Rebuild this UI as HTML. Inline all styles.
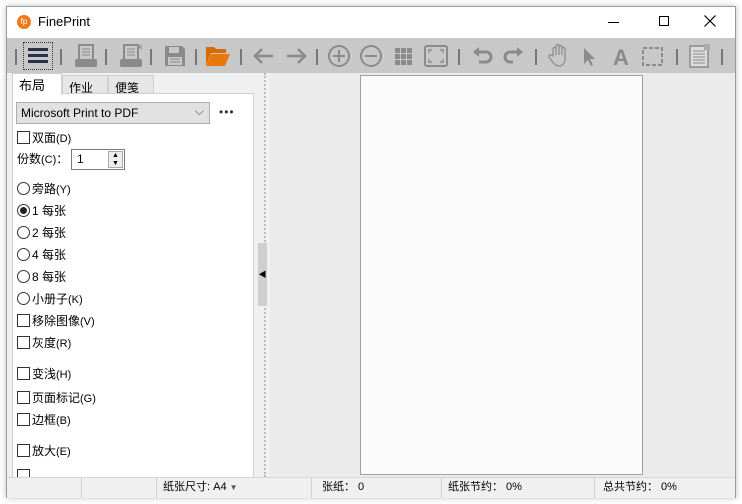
<!DOCTYPE html><html><head><meta charset="utf-8"><style>
*{margin:0;padding:0;box-sizing:border-box}
body{width:742px;height:504px;background:#fff;position:relative;overflow:hidden;font-family:"Liberation Sans","Noto Sans CJK SC",sans-serif;font-size:12px;color:#000}
.win{position:absolute;left:6px;top:6px;width:730px;height:492px;border:1px solid #9a9a9a;background:#f0f0f0;box-shadow:0 0 6px rgba(0,0,0,.25)}
.a{position:absolute}
.tb{left:0;top:31px;width:728px;height:35px;background:#c8c8c8}
.sep{position:absolute;top:11px;width:2px;height:16px;background:#777}
.row{position:absolute;left:10px;font-size:12px;height:16px;line-height:16px;white-space:nowrap}
.cb{display:inline-block;vertical-align:-2px;width:13px;height:13px;border:1px solid #333;background:#fff;margin-right:2px}
.rb{display:inline-block;vertical-align:-2px;width:13px;height:13px;border:1px solid #333;border-radius:50%;background:#fff;margin-right:2px;position:relative}
.sm{font-size:11px}
.st{position:absolute;top:470px;height:21px;border-left:1px solid #d0d0d0;font-size:11px;line-height:21px}
</style></head><body>
<div class="win">
<div class="a" style="left:0;top:0;width:728px;height:31px;background:#fff"></div>
<div class="a" style="left:10px;top:8px;width:14px;height:14px;border-radius:50%;background:#f07a1a;color:#fff;font-size:8px;line-height:14px;text-align:center">fp</div>
<div class="a" style="left:31px;top:7px;font-size:13px">FinePrint</div>
<div class="a" style="left:601px;top:15px;width:11px;height:1px;background:#000"></div>
<div class="a" style="left:652px;top:9px;width:10px;height:10px;border:1px solid #000"></div>
<svg class="a" style="left:697px;top:8px" width="12" height="12"><path d="M0.5 0.5l11 11M11.5 0.5l-11 11" stroke="#000" stroke-width="1.2"/></svg>
<div class="a tb">
<div class="sep" style="left:8px"></div>
<div class="a" style="left:16px;top:4px;width:30px;height:28px;border:1px dotted #333"></div>
<div class="a" style="left:21px;top:10px;width:20px;height:3px;background:#2a2f4a;box-shadow:0 6px 0 #2a2f4a,0 12px 0 #2a2f4a"></div>
<div class="sep" style="left:53px"></div>
<svg class="a" style="left:66px;top:5px" width="28" height="26"><rect x="6" y="2" width="14" height="15" fill="none" stroke="#8a8a8a" stroke-width="2"/><path d="M9 6h8M9 9h8M9 12h8" stroke="#8a8a8a"/><rect x="2" y="16" width="22" height="8" rx="2" fill="#8a8a8a"/></svg>
<div class="sep" style="left:98px"></div>
<svg class="a" style="left:111px;top:5px" width="28" height="26"><rect x="6" y="2" width="14" height="15" fill="none" stroke="#8a8a8a" stroke-width="2"/><path d="M9 6h8M9 9h8M9 12h8M20 2l4 4M24 2l-4 4" stroke="#8a8a8a"/><rect x="2" y="16" width="22" height="8" rx="2" fill="#8a8a8a"/></svg>
<div class="sep" style="left:143px"></div>
<svg class="a" style="left:156px;top:6px" width="24" height="24"><path d="M2 2h17l3 3v17H2z" fill="#8a8a8a"/><rect x="6" y="3" width="10" height="6" fill="#c8c8c8"/><rect x="5" y="13" width="14" height="8" fill="#c8c8c8"/><path d="M7 15h10M7 18h10" stroke="#8a8a8a"/></svg>
<div class="sep" style="left:188px"></div>
<svg class="a" style="left:198px;top:6px" width="26" height="24"><path d="M1 3h8l2 2h10v4H6L1 21z" fill="#d86a00"/><path d="M6 10h19l-5 12H1z" fill="#e8780a"/></svg>
<div class="sep" style="left:233px"></div>
<svg class="a" style="left:244px;top:7px" width="80" height="22"><path d="M4 11h18M11 4l-7 7 7 7" fill="none" stroke="#8a8a8a" stroke-width="2.5"/><path d="M36 11h18M47 4l7 7-7 7" fill="none" stroke="#8a8a8a" stroke-width="2.5"/></svg>
<div class="sep" style="left:309px"></div>
<svg class="a" style="left:320px;top:6px" width="130" height="24"><circle cx="12" cy="12" r="10" fill="none" stroke="#8a8a8a" stroke-width="2"/><path d="M12 6v12M6 12h12" stroke="#8a8a8a" stroke-width="2"/><circle cx="44" cy="12" r="10" fill="none" stroke="#8a8a8a" stroke-width="2"/><path d="M38 12h12" stroke="#8a8a8a" stroke-width="2"/><g fill="#8a8a8a"><rect x="68" y="4" width="5" height="5"/><rect x="74" y="4" width="5" height="5"/><rect x="80" y="4" width="5" height="5"/><rect x="68" y="10" width="5" height="5"/><rect x="74" y="10" width="5" height="5"/><rect x="80" y="10" width="5" height="5"/><rect x="68" y="16" width="5" height="5"/><rect x="74" y="16" width="5" height="5"/><rect x="80" y="16" width="5" height="5"/></g><rect x="98" y="2" width="22" height="20" rx="2" fill="none" stroke="#8a8a8a" stroke-width="2"/><path d="M102 9V6h3M116 9V6h-3M102 15v3h3M116 15v3h-3" fill="none" stroke="#8a8a8a" stroke-width="1.5"/></svg>
<div class="sep" style="left:451px"></div>
<svg class="a" style="left:465px;top:7px" width="60" height="22"><path d="M4 7h10a5 5 0 0 1 0 10H7" fill="none" stroke="#8a8a8a" stroke-width="3"/><path d="M1 7l6-5v10z" fill="#8a8a8a"/><path d="M48 7H38a5 5 0 0 0 0 10h3" fill="none" stroke="#8a8a8a" stroke-width="3"/><path d="M51 7l-6-5v10z" fill="#8a8a8a"/></svg>
<div class="sep" style="left:528px"></div>
<svg class="a" style="left:540px;top:5px" width="130" height="26"><path d="M6 13V6a1.5 1.5 0 0 1 3 0v6V3a1.5 1.5 0 0 1 3 0v9V4a1.5 1.5 0 0 1 3 0v8V6a1.5 1.5 0 0 1 3 0v10c0 4-3 7-6 7s-5-2-7-5l-3-4a1.5 1.5 0 0 1 2-2z" fill="none" stroke="#8a8a8a" stroke-width="1.2"/><path d="M37 5v16l4-4 3 6 2-1-3-6h5z" fill="#8a8a8a"/><text x="66" y="22" font-size="22" font-weight="bold" fill="#8a8a8a" font-family="Liberation Sans">A</text><rect x="96" y="5" width="19" height="17" fill="none" stroke="#8a8a8a" stroke-width="2" stroke-dasharray="4 2"/></svg>
<div class="sep" style="left:669px"></div>
<svg class="a" style="left:680px;top:5px" width="26" height="26"><rect x="3" y="3" width="18" height="21" fill="#ddd" stroke="#8a8a8a" stroke-width="1.5"/><path d="M6 8h12M6 11h12M6 14h12M6 17h12M6 20h12" stroke="#8a8a8a"/><rect x="17" y="1" width="6" height="6" fill="#aaa"/></svg>
<div class="sep" style="left:714px"></div>
</div>
<div class="a" style="left:55px;top:68px;width:46px;height:19px;background:#e6e6e6;border:1px solid #d0d0d0;font-size:12px;padding:3px 0 0 6px">作业</div>
<div class="a" style="left:101px;top:68px;width:46px;height:19px;background:#e6e6e6;border:1px solid #d0d0d0;font-size:12px;padding:3px 0 0 6px">便笺</div>
<div class="a" style="left:5px;top:86px;width:242px;height:384px;background:#fff;border:1px solid #d0d0d0;border-bottom:none"></div>
<div class="a" style="left:5px;top:66px;width:50px;height:22px;background:#fff;border:1px solid #d0d0d0;border-bottom:none;font-size:13px;padding:1px 0 0 6px">布局</div>
<div class="a" style="left:9px;top:95px;width:194px;height:22px;background:#e1e1e1;border:1px solid #adadad;font-size:12px;padding:3px 0 0 4px">Microsoft Print to PDF<span style="position:absolute;right:5px;top:1px;color:#555">⌵</span></div>
<div class="a" style="left:212px;top:98px;font-size:12px;letter-spacing:1px;color:#333">•••</div>
<div class="row" style="top:123px"><span class="cb"></span>双面<span class="sm">(D)</span></div>
<div class="row" style="top:144px">份数<span class="sm">(C)</span>：</div>
<div class="a" style="left:64px;top:142px;width:54px;height:21px;border:1px solid #7a7a7a;background:#fff;padding:2px 0 0 5px">1</div>
<div class="a" style="left:101px;top:144px;width:15px;height:17px;border:1px solid #aaa;background:#eee;font-size:7px;text-align:center;line-height:8px">▲<br>▼</div>
<div class="row" style="top:174px"><span class="rb"></span>旁路<span class="sm">(Y)</span></div>
<div class="row" style="top:196px"><span class="rb"><span style="position:absolute;left:2px;top:2px;width:7px;height:7px;border-radius:50%;background:#222"></span></span>1 每张</div>
<div class="row" style="top:218px"><span class="rb"></span>2 每张</div>
<div class="row" style="top:240px"><span class="rb"></span>4 每张</div>
<div class="row" style="top:262px"><span class="rb"></span>8 每张</div>
<div class="row" style="top:284px"><span class="rb"></span>小册子<span class="sm">(K)</span></div>
<div class="row" style="top:306px"><span class="cb"></span>移除图像<span class="sm">(V)</span></div>
<div class="row" style="top:328px"><span class="cb"></span>灰度<span class="sm">(R)</span></div>
<div class="row" style="top:359px"><span class="cb"></span>变浅<span class="sm">(H)</span></div>
<div class="row" style="top:383px"><span class="cb"></span>页面标记<span class="sm">(G)</span></div>
<div class="row" style="top:405px"><span class="cb"></span>边框<span class="sm">(B)</span></div>
<div class="row" style="top:436px"><span class="cb"></span>放大<span class="sm">(E)</span></div>
<div class="a" style="left:10px;top:462px;width:13px;height:8px;border:1px solid #333;border-bottom:none"></div>
<div class="a" style="left:257px;top:66px;width:0;height:404px;border-left:2px dotted #bbb"></div>
<div class="a" style="left:251px;top:236px;width:9px;height:63px;background:#cfcfcf;font-size:8px;line-height:63px;text-align:center">◀</div>
<div class="a" style="left:263px;top:66px;width:465px;height:404px;background:#ebebeb"></div>
<div class="a" style="left:353px;top:68px;width:283px;height:400px;background:#fafafa;border:1px solid #a0a0a0"></div>
<div class="a" style="left:0;top:470px;width:728px;height:21px;background:#f0f0f0;border-top:1px solid #d6d6d6"></div>
<div class="st" style="left:74px"></div>
<div class="st" style="left:149px;padding-left:6px;width:155px">纸张尺寸: A4 <span style="font-size:8px;color:#555">▼</span></div>
<div class="st" style="left:304px;padding-left:10px">张纸：&nbsp;0</div>
<div class="st" style="left:434px;padding-left:6px">纸张节约：&nbsp;0%</div>
<div class="st" style="left:587px;padding-left:8px">总共节约：&nbsp;0%</div>
</div>
</body></html>
